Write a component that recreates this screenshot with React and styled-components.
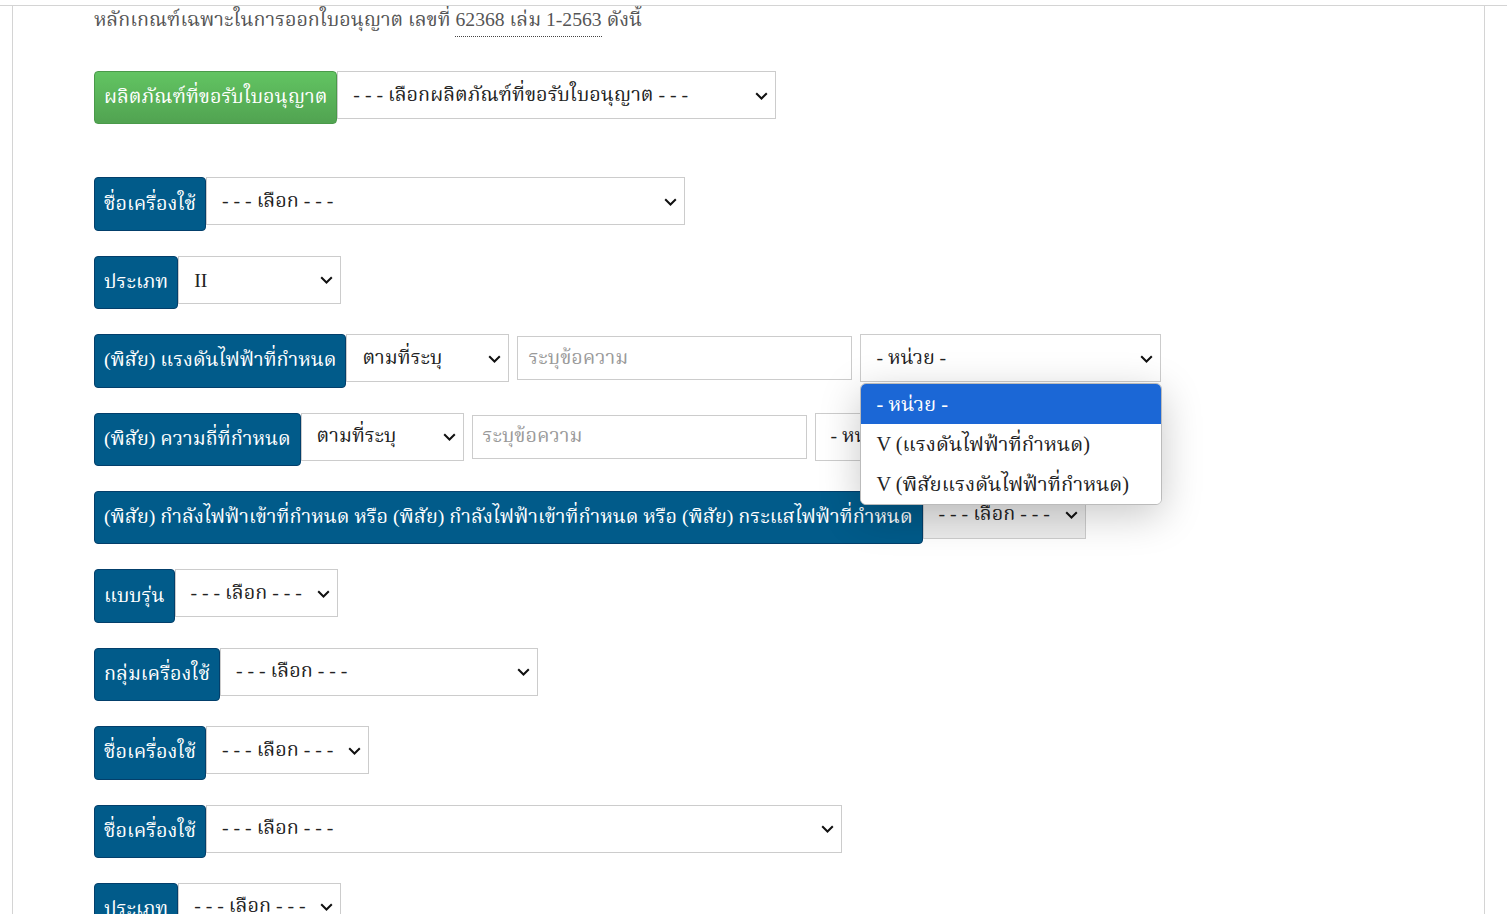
import React from "react";
import styled, { createGlobalStyle } from "styled-components";

const GlobalStyle = createGlobalStyle`
  html, body { margin: 0; padding: 0; background: #fff; }
  body { font-family: "Liberation Serif", "Noto Serif Thai", "Noto Sans Thai", serif; }
`;

const Page = styled.div`
  margin-top: 5px;
  border-top: 1px solid #d4d4d4;
  height: 908px;
  overflow: hidden;
`;

const Panel = styled.div`
  margin-left: 12px;
  width: 1473px;
  height: 100%;
  border-left: 1px solid #d4d4d4;
  border-right: 1px solid #d4d4d4;
  padding-left: 81px;
  box-sizing: border-box;
`;

const Intro = styled.p`
  margin: 0;
  font-size: 19.7px;
  line-height: 26px;
  color: #555;
`;

const Dotted = styled.span`
  display: inline-block;
  border-bottom: 1px dotted #444;
  padding-bottom: 4px;
  line-height: 26px;
`;

const Form = styled.div`
  display: flex;
  flex-direction: column;
  gap: 25px;
  margin-top: 34px;
`;

const Row = styled.div`
  display: flex;
  align-items: flex-start;
  margin-bottom: ${(p) => p.$extra || 0}px;
`;

const Label = styled.div`
  box-sizing: border-box;
  height: 53.4px;
  display: flex;
  align-items: center;
  padding: 1px 9px 0;
  white-space: nowrap;
  color: #fff;
  font-size: 19.8px;
  border-radius: 4px;
  border: 1px solid ${(p) => (p.$green ? "#4a9a4a" : "#033f6b")};
  background: ${(p) =>
    p.$green ? "linear-gradient(#62c462, #51a351)" : "#015b8a"};
`;

const Field = styled.div`
  position: relative;
  box-sizing: border-box;
  height: ${(p) => p.$h || 48}px;
  width: ${(p) => p.$w}px;
  margin-left: ${(p) => p.$ml || 0}px;
  margin-top: ${(p) => p.$mt || 0}px;
  border: 1px solid #ccc;
  background: ${(p) => p.$bg || "#fff"};
  display: flex;
  align-items: center;
  justify-content: space-between;
  padding: 1px 7px 0 ${(p) => p.$pl || 15}px;
  font-size: 19.8px;
  color: ${(p) => (p.$placeholder ? "#9a9a9a" : "#222")};
  white-space: nowrap;
`;

const Chevron = () => (
  <svg width="13" height="8" viewBox="0 0 13 8" style={{ flex: "none" }}>
    <path d="M1.2 1.2 L6.5 6.5 L11.8 1.2" fill="none" stroke="#111" strokeWidth="2" />
  </svg>
);

const Menu = styled.div`
  position: absolute;
  left: -1px;
  top: 48px;
  width: 300px;
  background: #fff;
  border: 1px solid #bbb;
  border-radius: 6px;
  overflow: hidden;
  box-shadow: 0 10px 40px rgba(0, 0, 0, 0.22);
  z-index: 5;
`;

const Option = styled.div`
  height: 40px;
  display: flex;
  align-items: center;
  padding: 2px 0 0 15px;
  box-sizing: border-box;
  font-size: 20.3px;
  color: ${(p) => (p.$active ? "#fff" : "#222")};
  background: ${(p) => (p.$active ? "#1b67d6" : "#fff")};
`;

const Select = ({ w, value, children, ...rest }) => (
  <Field $w={w} {...rest}>
    <span>{value}</span>
    <Chevron />
    {children}
  </Field>
);

const PICK = "- - - เลือก - - -";

export default function App() {
  return (
    <>
      <GlobalStyle />
      <Page>
        <Panel>
          <Intro>
            หลักเกณฑ์เฉพาะในการออกใบอนุญาต เลขที่ <Dotted>62368 เล่ม 1-2563</Dotted> ดังนี้
          </Intro>
          <Form>
            <Row $extra={28}>
              <Label $green>ผลิตภัณฑ์ที่ขอรับใบอนุญาต</Label>
              <Select w={439} h={49} value="- - - เลือกผลิตภัณฑ์ที่ขอรับใบอนุญาต - - -" />
            </Row>
            <Row>
              <Label>ชื่อเครื่องใช้</Label>
              <Select w={479} value={PICK} />
            </Row>
            <Row>
              <Label>ประเภท</Label>
              <Select w={163} value="II" />
            </Row>
            <Row>
              <Label>(พิสัย) แรงดันไฟฟ้าที่กำหนด</Label>
              <Select w={163} value="ตามที่ระบุ" />
              <Field $w={335} $h={44} $ml={8} $mt={2} $pl={10} $placeholder>ระบุข้อความ</Field>
              <Select w={301} $ml={8} value="- หน่วย -">
                <Menu>
                  <Option $active>- หน่วย -</Option>
                  <Option>V (แรงดันไฟฟ้าที่กำหนด)</Option>
                  <Option>V (พิสัยแรงดันไฟฟ้าที่กำหนด)</Option>
                </Menu>
              </Select>
            </Row>
            <Row>
              <Label>(พิสัย) ความถี่ที่กำหนด</Label>
              <Select w={163} value="ตามที่ระบุ" />
              <Field $w={335} $h={44} $ml={8} $mt={2} $pl={10} $placeholder>ระบุข้อความ</Field>
              <Select w={301} $ml={8} value="- หน่วย -" />
            </Row>
            <Row>
              <Label>
                (พิสัย) กำลังไฟฟ้าเข้าที่กำหนด หรือ (พิสัย) กำลังไฟฟ้าเข้าที่กำหนด หรือ (พิสัย) กระแสไฟฟ้าที่กำหนด
              </Label>
              <Select w={163} $bg="#ececec" value={PICK} />
            </Row>
            <Row>
              <Label>แบบรุ่น</Label>
              <Select w={163} value={PICK} />
            </Row>
            <Row>
              <Label>กลุ่มเครื่องใช้</Label>
              <Select w={318} value={PICK} />
            </Row>
            <Row>
              <Label>ชื่อเครื่องใช้</Label>
              <Select w={163} value={PICK} />
            </Row>
            <Row>
              <Label>ชื่อเครื่องใช้</Label>
              <Select w={636} value={PICK} />
            </Row>
            <Row>
              <Label>ประเภท</Label>
              <Select w={163} value={PICK} />
            </Row>
          </Form>
        </Panel>
      </Page>
    </>
  );
}
